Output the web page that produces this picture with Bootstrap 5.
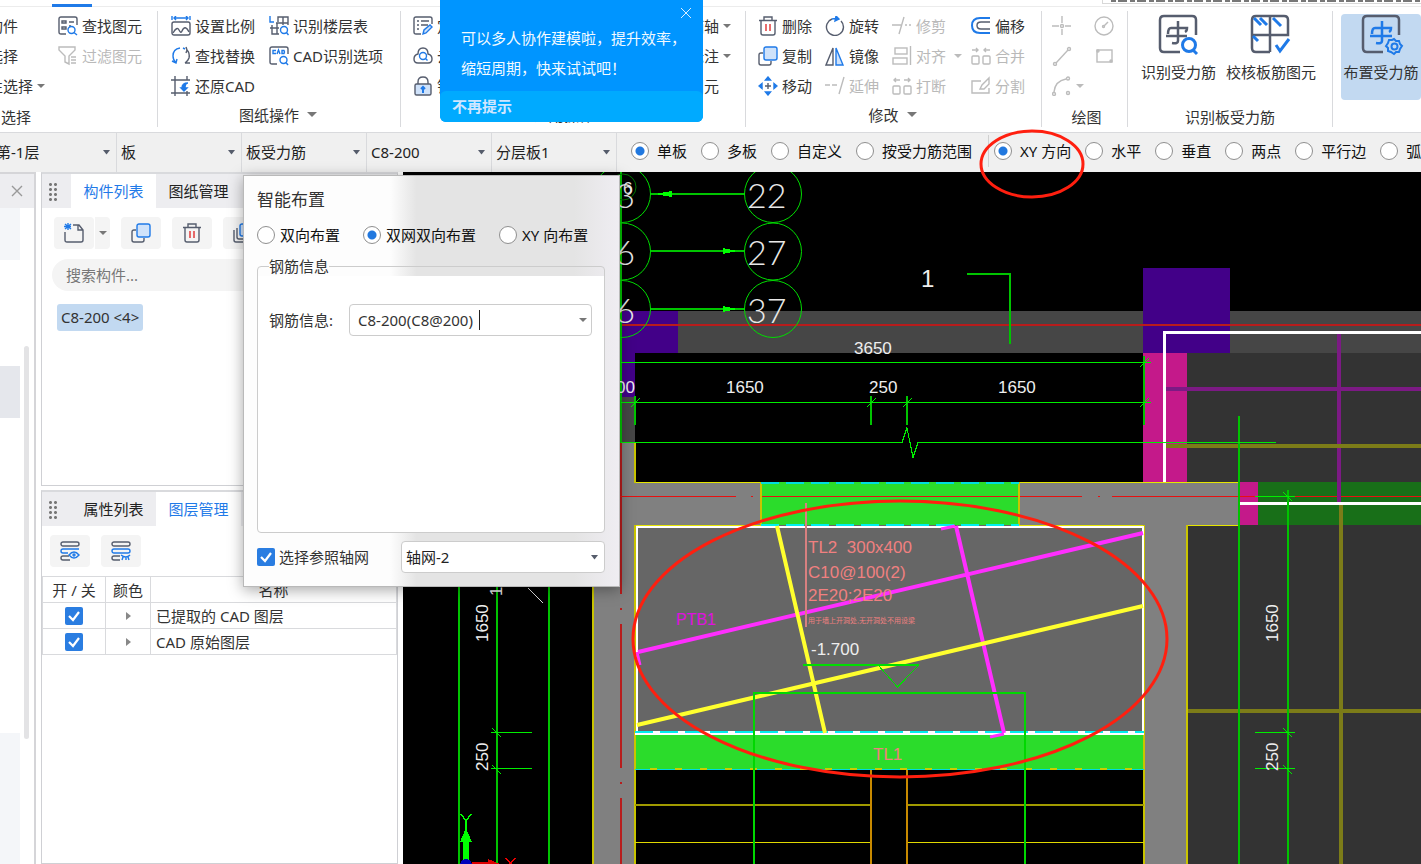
<!DOCTYPE html>
<html lang="zh-CN">
<head>
<meta charset="utf-8">
<meta name="viewport" content="width=device-width, initial-scale=1">
<title>智能布置</title>
<link rel="stylesheet" href="https://cdn.jsdelivr.net/npm/bootstrap@5.3.0/dist/css/bootstrap.min.css">
<style>
  :root { --ink:#333; --blue:#1f7ae8; --line:#d9dadd; --bar:#f0f0f0; --icon:#565d6e; --sel:#c2d9f1; }
  body { font:15px/20px "Noto Sans","Noto Sans CJK SC",sans-serif; color:var(--ink); background:#fff; }
  .app { height:100vh; min-height:600px; }
  svg.ico { width:20px; height:20px; flex:none; fill:none; stroke:var(--icon); stroke-width:1.4; overflow:visible; }
  .caret { flex:none; width:0; height:0; border:4px solid transparent; border-top:4px solid #777; border-bottom:0; }
  .caret-big { border-width:5px; border-bottom:0; }

  /* ribbon */
  .tabstrip { height:7px; flex:none; border-bottom:1px solid #ececec; }
  .tabstrip i { position:absolute; left:52px; top:4px; width:40px; height:3px; background:var(--blue); }
  .tabtip { position:absolute; left:1102px; right:0; top:0; height:4px; border:1px solid #d8d8d8; border-top:0; border-right:0; background:#fff; }
  .tabtip span { display:block; margin-left:8px; height:2px; background:repeating-linear-gradient(90deg,#777 0 5px,#fff 5px 7px,#777 7px 16px,#fff 16px 19px); }
  .ribbon { height:125px; flex:none; padding:4px 0 5px; }
  .rgroup { border-right:1px solid var(--line); flex:none; display:flex; flex-direction:column; }
  .rgroup:last-child { border:0; }
  .rcols { height:90px; display:flex; }
  .rcols > div { flex:none; }
  .rbtn { display:flex; align-items:center; gap:4px; height:30px; padding:0; border:0; background:none; color:inherit; white-space:nowrap; }
  .rbtn:disabled { color:#b9b9b9; }
  .rbtn:disabled svg.ico { stroke:#bcbcbc; }
  .rbtn:disabled .caret { border-top-color:#bbb; }
  .rlabel { height:26px; display:flex; align-items:center; justify-content:center; gap:8px; padding-top:5px; white-space:nowrap; }
  .rlabel-menu { padding-top:1px; }
  .g-select { width:283px; margin-left:-125px; padding-left:83px; }
  .g-select .rlabel { margin-left:-83px; }
  .g-paper { width:243px; padding-left:13px; }
  .g-paper .rlabel { margin-left:-15px; }
  .g-common { width:345px; padding-left:12px; }
  .g-common .rlabel { margin-left:-12px; }
  .g-edit { width:296px; padding-left:12px; }
  .g-edit .rlabel { margin-left:-14px; }
  .g-draw { width:86px; padding-left:10px; }
  .g-draw .rlabel { margin-left:-6px; }
  .g-check { width:205px; }
  .g-place { flex:1 1 0; min-width:0; overflow:hidden; padding-left:8px; }
  .w42 { width:42px; } .w67 { width:67px; } .w79 { width:79px; } .w98 { width:98px; } .w100x { width:100px; } .w246 { width:246px; }
  .big { border:0; background:none; color:inherit; display:flex; flex-direction:column; align-items:center; gap:8px; white-space:nowrap; padding:3px 5px; height:86px; border-radius:4px; }
  .big svg { width:40px; height:40px; fill:none; stroke:var(--icon); stroke-width:3; overflow:visible; }
  .big.on { background:var(--sel); margin-top:3px; padding-top:0; }

  /* option bar */
  .optbar { height:40px; flex:none; background:var(--bar); border-top:1px solid var(--line); white-space:nowrap; }
  .combo { appearance:none; width:125px; height:100%; flex:none; border:0; border-right:1px solid var(--line); padding:0 16px 1px 4px; color:#222; outline:0;
    background:url("data:image/svg+xml,%3Csvg xmlns='http://www.w3.org/2000/svg' width='7' height='5'%3E%3Cpath d='M0 0h7L3.5 4.5z' fill='%23555c6b'/%3E%3C/svg%3E") no-repeat right 6px center; }
  .combo-first { margin-left:-8px; }
  .ranges { margin-left:14px; margin-bottom:3px; }
  .rad { display:flex; align-items:center; gap:8px; margin-right:14px; color:#111; flex:none; }
  .rad input { appearance:none; width:18px; height:18px; margin:0; border:1px solid #8f8f8f; border-radius:50%; background:#fff; flex:none; }
  .rad input:checked { background:radial-gradient(circle,#2178df 0 4px,#fff 5px); }
  .vsep { width:1px; height:32px; background:#d0d0d0; margin:0 5px 0 2px; }

  /* docked panels */
  .rail { width:36px; flex:none; border:solid #d5d5d8; border-width:2px 2px 0 0; background:#fff; }
  .railhead { height:34px; background:#ededf0; }
  .railbody { flex:1; }
  .railtrack { width:20px; }
  .soft { background:#f4f6f9; } .mid { background:#e5e7ec; }
  .h52 { height:52px; } .h106 { height:106px; } .h315 { height:315px; }
  .railscroll { width:5px; height:393px; margin:138px 0 0 4px; border-radius:3px; background:#e3e3e5; }
  .dock { width:357px; flex:none; margin:0 5px; }
  .pane { border:1px solid #cfd0d4; border-top:2px solid var(--line); background:#fff; }
  .pane-top { height:314px; }
  .panehead { height:34px; background:#ededf0; display:flex; }
  .ptab { border:0; background:none; padding:0 12px; width:85px; white-space:nowrap; color:#222; }
  .ptab.on { background:#fff; color:var(--blue); }
  .grip { width:29px; padding:8px 0 0 6px; }
  .grip i { display:block; width:9px; height:19px; background:radial-gradient(circle,#777 1px,transparent 2px) 0 0/5px 5px; }
  .tools { display:flex; margin-top:9px; }
  .tools-list { padding-left:12px; }
  .tools-layer { padding-left:8px; gap:11px; margin-bottom:9px; }
  .tbtn { width:40px; height:32px; border:0; border-radius:4px; background:#f4f4f4; display:flex; align-items:center; justify-content:center; padding:0; flex:none; }
  .tbtn-s { width:15px; border-radius:0 4px 4px 0; margin:0 11px 0 1px; }
  .tbtn-m { margin-right:11px; }
  .findbar { padding:0 10px; margin-top:10px; }
  .find { height:32px; border:0; border-radius:16px; background:#f4f4f4; padding:0 14px; width:100%; outline:0; }
  .find::placeholder { color:#777; }
  .chiprow { padding-left:15px; margin-top:13px; }
  .chip { display:inline-block; background:var(--sel); border-radius:3px; padding:3px 4px; height:27px; white-space:pre; }
  .layers { width:100%; border-collapse:collapse; table-layout:fixed; margin:0; }
  .layers th, .layers td { border:1px solid var(--line); height:26px; padding:0 5px; font-weight:400; white-space:nowrap; }
  .layers th:first-child, .layers td:first-child { width:63px; }
  .layers th:nth-child(2) { width:45px; }
  .tick { appearance:none; display:block; width:18px; height:18px; margin:0; border-radius:2px; flex:none;
    background:#2a7de1 url("data:image/svg+xml,%3Csvg xmlns='http://www.w3.org/2000/svg' width='18' height='18'%3E%3Cpath d='M4 9l4 4 6-8' fill='none' stroke='white' stroke-width='2.2'/%3E%3C/svg%3E"); }
  .expand { display:block; border:4px solid transparent; border-left:5px solid #888; border-right:0; width:0; margin:0 auto; }

  /* drawing */
  .cad { flex:1; min-width:0; background:#000; }
  .cad svg { width:100%; height:100%; display:block; }
  .cad text { font-family:"Liberation Sans","Noto Sans CJK SC",sans-serif; white-space:pre; }
  .dim { font-size:17px; fill:#eee; }
  .cad text.axis { font-family:Lato,sans-serif; font-size:34px; font-weight:300; fill:#e8e8e8; }
  .cad text.cut { font-size:24px; }
  .note { font-size:17px; fill:#f08080; }

  /* floating windows */
  .toastbox { position:absolute; left:440px; top:0; width:263px; height:122px; border-radius:0 0 6px 6px; background:#0095ff; color:#f2faff; z-index:5; overflow:hidden; }
  .toastbox p { line-height:30px; margin:0; padding:23px 0 0 21px; white-space:nowrap; }
  .toastbox .shut { position:absolute; right:11px; top:7px; border:0; background:none; padding:0; line-height:0; }
  .toastbox a { display:block; margin-top:8px; height:31px; line-height:31px; padding-left:12px; background:#0af; color:#cfe6ff; border-radius:6px 6px 0 0; text-decoration:none; font-weight:600; }
  .dlg { position:absolute; left:243px; top:175px; width:377px; height:412px; padding:14px 14px 13px 13px; z-index:4; border:1px solid #b9b9b9; box-shadow:0 3px 14px rgba(0,0,0,.35);
    background:linear-gradient(90deg,#fdfdfd 0 39%,#e4e4e4 46% 88%,#efedf2); display:flex; flex-direction:column; }
  .dlg h1 { font-size:17px; line-height:20px; margin:0; color:#333; font-weight:400; }
  .modes { margin:15px 0 11px; }
  .dlg .rad { gap:5px; margin-right:23px; }
  .dlg fieldset { border:1px solid #ccc; border-radius:4px; background:linear-gradient(transparent 0 9px,#fff 9px); padding:0 12px 0 11px; flex:1; margin:0 0 8px; }
  .dlg legend { float:none; width:auto; font-size:15px; line-height:20px; margin:0; padding:0; color:#333; }
  .field { margin-top:28px; }
  .box { height:32px; border:1px solid #ccc; border-radius:4px; background-color:#fff; padding-left:8px; }
  .box.combo { width:204px; padding-left:4px; border:1px solid #ccc; }
  .textcombo { flex:1; }
  .textcombo input { border:0; outline:0; width:126px; padding:0; background:none; color:#333; }
  .beam { width:1px; height:20px; background:#222; margin-left:-5px; }
  .marks { position:absolute; inset:0; width:100%; height:100%; pointer-events:none; z-index:6; fill:none; stroke:#ff1f0f; stroke-width:3; }
</style>
</head>
<body>
<svg class="d-none">
  <symbol id="i-find" viewBox="0 0 20 20"><path d="M8 18H3q-2 0-2-2V3q0-2 2-2h14q2 0 2 2v6M4 5h4v2H4zM11 6h5M4 11h4v2H4zM11 10h2"/><g stroke="#1f7ae8"><circle cx="13.500" cy="14" r="3.500"/><path d="M16 16.500l3 2.500"/></g></symbol>
  <symbol id="i-filter" viewBox="0 0 20 20"><path d="M1 1h16v3l-6 6v8l-4-2v-6L1 4zM13 11h5M13 14h5M13 17h5"/></symbol>
  <symbol id="i-scale" viewBox="0 0 20 20"><rect x="1" y="6" width="18" height="13" rx="2"/><path d="M2 17q4-7 6-3t3 1q3-7 7 1"/><path stroke="#1f7ae8" d="M1 0v4M19 0v4M3 2h14M5 0L3 2l2 2M15 0l2 2-2 2"/></symbol>
  <symbol id="i-swap" viewBox="0 0 20 20"><path stroke="#1f7ae8" d="M9 2Q2 3 2 10q0 4 3 7M1 15l4 2 1-4M12 2l2 1"/><path d="M16 4q3 3 2 8-1 3-4 5M14 17h5M15 1l1 3-1 3"/></symbol>
  <symbol id="i-restore" viewBox="0 0 20 20"><path d="M4 0v20M0 4h19M0 17h19M16 0v4M16 15v5"/><path stroke="#1f7ae8" fill="#1f7ae8" d="M17 7q-3 0-3 5h2l-3 3-3-3h1q0-5 6-5z"/></symbol>
  <symbol id="i-floor" viewBox="0 0 20 20"><path d="M9 6V1h10v8M14 1v8M3 9v9h7M8 7v11M1 12h9M7 7h12"/><g stroke="#1f7ae8"><path d="M1 0v6h4"/><circle cx="15" cy="14" r="3.500"/><path d="M17.500 16.500l2 2.500"/></g></symbol>
  <symbol id="i-cad" viewBox="0 0 20 20"><path d="M8 18H3q-2 0-2-2V3q0-2 2-2h14q2 0 2 2v5"/><g stroke="#1f7ae8"><path d="M7 4.500H4v3h3M8 8l1.500-4L11 8M13 4.500v3h2q1-1.500 0-3z"/><circle cx="14.500" cy="14" r="3.500"/><path d="M17 16.500l2 2.500"/></g></symbol>
  <symbol id="i-define" viewBox="0 0 20 20"><path d="M8 18H3q-2 0-2-2V3q0-2 2-2h14q2 0 2 2v5M4 5h2M8 5h8M4 9h2M8 9h7M4 13h2"/><path stroke="#1f7ae8" fill="#cfe2fa" d="M10 18l1-4 6-5 2 2-6 6z"/></symbol>
  <symbol id="i-cloud" viewBox="0 0 20 20"><path d="M5 17q-4 0-4-4t4-5q0-6 5-6t5 6q4 1 4 5t-4 4z"/><g stroke="#1f7ae8"><circle cx="10" cy="10" r="3.500"/><path d="M12.500 12.500l2 2"/></g></symbol>
  <symbol id="i-lock" viewBox="0 0 20 20"><path d="M5 8V6q0-5 5-5t5 5v2"/><rect x="2" y="8" width="16" height="11" rx="1.500" fill="#cfe2fa"/><path stroke="#1f7ae8" stroke-width="2" d="M10 17v-5M8 13l2-2 2 2"/></symbol>
  <symbol id="i-trash" viewBox="0 0 20 20"><path d="M1 4.500h18M6 4V1h8v3M3 5v12q0 2 2 2h10q2 0 2-2V5"/><path stroke="#e03030" d="M8 8v7M12 8v7"/></symbol>
  <symbol id="i-copy" viewBox="0 0 20 20"><path d="M5 7H3Q1 7 1 9v8q0 2 2 2h8q2 0 2-2v-2"/><rect x="6" y="1" width="13" height="13" rx="2" fill="#cfe2fa" stroke="#1f7ae8"/></symbol>
  <symbol id="i-copies" viewBox="0 0 20 20"><path d="M1 7v10q0 2 2 2h10M4 5v9q0 2 2 2h8"/><rect x="7" y="1" width="12" height="12" rx="2" fill="#cfe2fa" stroke="#1f7ae8"/></symbol>
  <symbol id="i-move" viewBox="0 0 20 20"><path d="M10 7v6M7 10h6"/><path stroke="#1f7ae8" fill="#1f7ae8" d="M7.500 4L10 1l2.500 3zM7.500 16l2.500 3 2.500-3zM4 7.500L1 10l3 2.500zM16 7.500l3 2.500-3 2.500z"/></symbol>
  <symbol id="i-rotate" viewBox="0 0 20 20"><path d="M7 3a8.500 8.500 0 1 0 9 2"/><path stroke="#1f7ae8" fill="#1f7ae8" d="M7 3q4-1 6 0M11 0l3 3-4 2z"/></symbol>
  <symbol id="i-mirror" viewBox="0 0 20 20"><path d="M8 2v17H1z"/><path stroke="#1f7ae8" fill="#cfe2fa" d="M11 2v17h7z"/></symbol>
  <symbol id="i-trim" viewBox="0 0 20 20"><path d="M0 9h9M13 9h2M17 9h2M12 1L7 18"/></symbol>
  <symbol id="i-extend" viewBox="0 0 20 20"><path d="M0 9h5M7 9h5M19 1l-5 17"/></symbol>
  <symbol id="i-align" viewBox="0 0 20 20"><rect x="3" y="2" width="12" height="6"/><rect x="1" y="12" width="14" height="6"/><path d="M18.500 0v19"/></symbol>
  <symbol id="i-break" viewBox="0 0 20 20"><rect x="1" y="10" width="7" height="8" rx="1"/><rect x="12" y="10" width="7" height="8" rx="1"/><path d="M8 4H2M4 2L2 4l2 2M12 4h6M16 2l2 2-2 2"/></symbol>
  <symbol id="i-merge" viewBox="0 0 20 20"><rect x="1" y="10" width="7" height="8" rx="1"/><rect x="12" y="10" width="7" height="8" rx="1"/><path d="M1 4h6M5 2l2 2-2 2M19 4h-6M15 2l-2 2 2 2"/></symbol>
  <symbol id="i-offset" viewBox="0 0 20 20"><path stroke="#1f7ae8" stroke-width="2" d="M19 2H9q-8 0-8 7.500T9 17h10"/><path d="M19 6H10q-4 0-4 3.500T10 13h9"/></symbol>
  <symbol id="i-split" viewBox="0 0 20 20"><path d="M10 5H1v12h17v-5M9 13l2-4 7-7v6l-5 5z"/></symbol>
  <symbol id="i-point" viewBox="0 0 20 20"><path d="M0 10h7M13 10h6M10 0v7M10 13v6"/><circle cx="10" cy="10" r="1.500"/></symbol>
  <symbol id="i-circle" viewBox="0 0 20 20"><circle cx="10" cy="10" r="9"/><path d="M10 10l4-4"/><circle cx="9.500" cy="10.500" r="1"/></symbol>
  <symbol id="i-line" viewBox="0 0 20 20"><path d="M4 17L16 4"/><circle cx="3" cy="18" r="1.500"/><circle cx="17" cy="3" r="1.500"/></symbol>
  <symbol id="i-rect" viewBox="0 0 20 20"><rect x="3" y="4" width="15" height="12"/><circle cx="4" cy="5" r="1"/><circle cx="17" cy="15" r="1"/></symbol>
  <symbol id="i-arc" viewBox="0 0 20 20"><path d="M2 16Q3 5 14 3"/><circle cx="2" cy="18" r="1.500"/><circle cx="16" cy="2.500" r="1.500"/><circle cx="16" cy="17" r="1.500"/></symbol>
  <symbol id="i-new" viewBox="0 0 20 20"><path d="M9 2h6l4 5v10q0 2-2 2H3q-2 0-2-2V9M14 2v5h5"/><path stroke="#1f7ae8" d="M1 1l6 5M7 1L1 6M4 0v7M0 3.500h7"/></symbol>
  <symbol id="i-show" viewBox="0 0 20 20"><rect x="1" y="1" width="18" height="4" rx="2"/><path stroke="#1f7ae8" d="M19 8H3q-2 0-2 2t2 2h5"/><path d="M9 15H3q-2 0-2 2t2 2h7"/><path stroke="#1f7ae8" d="M9 14q5-6 10 0-5 6-10 0z"/><circle cx="14" cy="14" r="1" stroke="#1f7ae8"/></symbol>
  <symbol id="i-hide" viewBox="0 0 20 20"><rect x="1" y="1" width="18" height="4" rx="2"/><rect x="1" y="8" width="18" height="4" rx="2" stroke="#1f7ae8"/><path d="M9 15H3q-2 0-2 2t2 2h6"/><path stroke="#1f7ae8" d="M10 14q5 4 9 0M12 16l-1 3M15 16v3M17 16l1 3"/></symbol>
</svg>

<div class="app d-flex flex-column position-relative overflow-hidden">
  <div class="tabstrip position-relative"><i></i><div class="tabtip"><span></span></div></div>

  <div class="ribbon d-flex overflow-hidden">
    <section class="rgroup g-select">
      <div class="rcols">
        <div class="w100x">
          <button class="rbtn">拾取构件</button><button class="rbtn">批量选择</button><button class="rbtn">按属性选择 <span class="caret"></span></button>
        </div>
        <div>
          <button class="rbtn"><svg class="ico"><use href="#i-find"/></svg>查找图元</button>
          <button class="rbtn" disabled><svg class="ico"><use href="#i-filter"/></svg>过滤图元</button>
        </div>
      </div>
      <div class="rlabel">选择</div>
    </section>
    <section class="rgroup g-paper">
      <div class="rcols">
        <div class="w98">
          <button class="rbtn"><svg class="ico"><use href="#i-scale"/></svg>设置比例</button>
          <button class="rbtn"><svg class="ico"><use href="#i-swap"/></svg>查找替换</button>
          <button class="rbtn"><svg class="ico"><use href="#i-restore"/></svg>还原CAD</button>
        </div>
        <div>
          <button class="rbtn"><svg class="ico"><use href="#i-floor"/></svg>识别楼层表</button>
          <button class="rbtn"><svg class="ico"><use href="#i-cad"/></svg>CAD识别选项</button>
        </div>
      </div>
      <div class="rlabel rlabel-menu">图纸操作 <span class="caret caret-big"></span></div>
    </section>
    <section class="rgroup g-common">
      <div class="rcols">
        <div class="w246">
          <button class="rbtn"><svg class="ico"><use href="#i-define"/></svg>定义</button>
          <button class="rbtn"><svg class="ico"><use href="#i-cloud"/></svg>云检查</button>
          <button class="rbtn"><svg class="ico"><use href="#i-lock"/></svg>锁定</button>
        </div>
        <div>
          <button class="rbtn">两点辅轴 <span class="caret"></span></button>
          <button class="rbtn">尺寸标注 <span class="caret"></span></button>
          <button class="rbtn">复制图元</button>
        </div>
      </div>
      <div class="rlabel rlabel-menu">通用操作 <span class="caret caret-big"></span></div>
    </section>
    <section class="rgroup g-edit">
      <div class="rcols">
        <div class="w67">
          <button class="rbtn"><svg class="ico"><use href="#i-trash"/></svg>删除</button>
          <button class="rbtn"><svg class="ico"><use href="#i-copy"/></svg>复制</button>
          <button class="rbtn"><svg class="ico"><use href="#i-move"/></svg>移动</button>
        </div>
        <div class="w67">
          <button class="rbtn"><svg class="ico"><use href="#i-rotate"/></svg>旋转</button>
          <button class="rbtn"><svg class="ico"><use href="#i-mirror"/></svg>镜像</button>
          <button class="rbtn" disabled><svg class="ico"><use href="#i-extend"/></svg>延伸</button>
        </div>
        <div class="w79">
          <button class="rbtn" disabled><svg class="ico"><use href="#i-trim"/></svg>修剪</button>
          <button class="rbtn" disabled><svg class="ico"><use href="#i-align"/></svg>对齐 <span class="caret ms-1"></span></button>
          <button class="rbtn" disabled><svg class="ico"><use href="#i-break"/></svg>打断</button>
        </div>
        <div>
          <button class="rbtn"><svg class="ico"><use href="#i-offset"/></svg>偏移</button>
          <button class="rbtn" disabled><svg class="ico"><use href="#i-merge"/></svg>合并</button>
          <button class="rbtn" disabled><svg class="ico"><use href="#i-split"/></svg>分割</button>
        </div>
      </div>
      <div class="rlabel rlabel-menu">修改 <span class="caret caret-big"></span></div>
    </section>
    <section class="rgroup g-draw">
      <div class="rcols">
        <div class="w42">
          <button class="rbtn" disabled aria-label="点"><svg class="ico"><use href="#i-point"/></svg></button>
          <button class="rbtn" disabled aria-label="直线"><svg class="ico"><use href="#i-line"/></svg></button>
          <button class="rbtn" disabled aria-label="弧"><svg class="ico"><use href="#i-arc"/></svg><span class="caret"></span></button>
        </div>
        <div>
          <button class="rbtn" disabled aria-label="圆"><svg class="ico"><use href="#i-circle"/></svg></button>
          <button class="rbtn" disabled aria-label="矩形"><svg class="ico"><use href="#i-rect"/></svg></button>
        </div>
      </div>
      <div class="rlabel">绘图</div>
    </section>
    <section class="rgroup g-check">
      <div class="rcols ps-2">
        <button class="big"><svg viewBox="1 0 40 40"><path stroke-width="2.500" d="M22 38H6q-4 0-4-4V6q0-4 4-4h28q4 0 4 4v15"/><path stroke-width="2.500" d="M20 7v20q0 3-6 2M10 20q0-6 3-6h16q0 3-2 4M8 22h21"/><g stroke="#1f7ae8"><circle cx="31" cy="31" r="6.500"/><path d="M35 36l4 4"/></g></svg>识别受力筋</button>
        <button class="big"><svg viewBox="1 0 40 40"><path stroke-width="2.500" d="M20 38H6q-4 0-4-4V6q0-4 4-4h28q4 0 4 4v15H2M20 2v36"/><g stroke="#1f7ae8"><path d="M4 4l7 7M10 4l7 7M23 4l8 8M3 22l5 5M26 31l4 6 9-12"/></g></svg>校核板筋图元</button>
      </div>
      <div class="rlabel">识别板受力筋</div>
    </section>
    <section class="rgroup g-place">
      <button class="big on"><svg viewBox="0 0 40 40"><path stroke-width="2.500" d="M22 38H6q-4 0-4-4V6q0-4 4-4h28q4 0 4 4v15"/><g stroke="#1f7ae8"><path stroke-width="2.500" d="M21 7v20q0 3-6 2M11 20q0-6 3-6h16q0 3-2 4M9 22h22"/><path stroke-width="2" d="M33 25l2 2 3 0 1 3 2 2-2 3-1 3-3 0-2 2-3-2-3-1 0-3-2-2 2-3 1-3 3 0z"/><circle cx="33.500" cy="32.500" r="3" stroke-width="2"/></g></svg>布置受力筋</button>
    </section>
  </div>

  <div class="optbar d-flex align-items-center overflow-hidden">
    <select class="combo combo-first" aria-label="楼层"><option>第-1层</option></select>
    <select class="combo" aria-label="构件类型"><option>板</option></select>
    <select class="combo" aria-label="构件"><option>板受力筋</option></select>
    <select class="combo" aria-label="名称"><option>C8-200</option></select>
    <select class="combo" aria-label="分层"><option>分层板1</option></select>
    <div class="ranges d-flex align-items-center">
      <label class="rad"><input type="radio" name="range" checked>单板</label>
      <label class="rad"><input type="radio" name="range">多板</label>
      <label class="rad"><input type="radio" name="range">自定义</label>
      <label class="rad"><input type="radio" name="range">按受力筋范围</label>
      <span class="vsep"></span>
      <label class="rad"><input type="radio" name="dir" checked>XY 方向</label>
      <label class="rad"><input type="radio" name="dir">水平</label>
      <label class="rad"><input type="radio" name="dir">垂直</label>
      <label class="rad"><input type="radio" name="dir">两点</label>
      <label class="rad"><input type="radio" name="dir">平行边</label>
      <label class="rad"><input type="radio" name="dir">弧线边</label>
    </div>
  </div>

  <div class="d-flex flex-grow-1 overflow-hidden">
    <aside class="rail d-flex flex-column">
      <div class="railhead d-flex align-items-center ps-2"><svg class="ico" viewBox="0 0 20 20"><path stroke="#999" d="M4 5l10 10M14 5L4 15"/></svg></div>
      <div class="railbody d-flex overflow-hidden">
        <div class="railtrack d-flex flex-column"><div class="h52 soft"></div><div class="h106"></div><div class="h52 mid"></div><div class="h315"></div><div class="flex-grow-1 soft"></div></div>
        <div class="railscroll"></div>
      </div>
    </aside>

    <div class="dock d-flex flex-column">
      <section class="pane pane-top">
        <div class="panehead"><span class="grip"><i></i></span><button class="ptab on">构件列表</button><button class="ptab">图纸管理</button></div>
        <div class="tools tools-list">
          <button class="tbtn" aria-label="新建"><svg class="ico"><use href="#i-new"/></svg></button><button class="tbtn tbtn-s" aria-label="更多"><span class="caret"></span></button>
          <button class="tbtn tbtn-m" aria-label="复制"><svg class="ico"><use href="#i-copy"/></svg></button>
          <button class="tbtn tbtn-m" aria-label="删除"><svg class="ico"><use href="#i-trash"/></svg></button>
          <button class="tbtn" aria-label="层间复制"><svg class="ico"><use href="#i-copies"/></svg></button>
        </div>
        <div class="findbar"><input class="find" type="search" placeholder="搜索构件..." aria-label="搜索构件"></div>
        <div class="chiprow"><span class="chip">C8-200 &lt;4&gt;</span></div>
      </section>
      <section class="pane mt-1 flex-grow-1">
        <div class="panehead"><span class="grip"><i></i></span><button class="ptab">属性列表</button><button class="ptab on">图层管理</button></div>
        <div class="tools tools-layer">
          <button class="tbtn" aria-label="显示图层"><svg class="ico"><use href="#i-show"/></svg></button>
          <button class="tbtn" aria-label="隐藏图层"><svg class="ico"><use href="#i-hide"/></svg></button>
        </div>
        <table class="layers">
          <thead><tr><th class="text-center">开 / 关</th><th class="text-center">颜色</th><th class="text-center">名称</th></tr></thead>
          <tbody>
            <tr><td><input class="tick mx-auto" type="checkbox" checked aria-label="已提取的 CAD 图层"></td><td><span class="expand"></span></td><td>已提取的 CAD 图层</td></tr>
            <tr><td><input class="tick mx-auto" type="checkbox" checked aria-label="CAD 原始图层"></td><td><span class="expand"></span></td><td>CAD 原始图层</td></tr>
          </tbody>
        </table>
      </section>
    </div>

    <main class="cad">
      <svg fill="none" shape-rendering="crispEdges">
        <g transform="translate(-403 -172)">
          <!-- walls, columns, slabs -->
          <path fill="#464646" d="M620 311h900v42H620zM593 353h42v90h-42z"/>
          <path fill="#420088" d="M600 311h78v42h-43v44h-35zM1143 268h87v85h-87z"/>
          <path fill="#333" d="M1187 353h400v130h-400zM1187 525h400v500h-400z"/>
          <path fill="#808080" d="M593 443h42v40h604v42h-52v500h-43V525H635v500h-42z"/>
          <path fill="#c4198a" d="M1143 353h44v130h-44zM1239 482h19v43h-19z"/>
          <path fill="#186f18" d="M1258 482h400v43h-400z"/>
          <path fill="#666" d="M635 525h509v208H635z"/>
          <path fill="#2bdc2b" d="M761 482h258v43H761zM635 734h509v35H635z"/>
          <!-- axis lines -->
          <path stroke="#b81c1c" stroke-width="2" d="M620 325h901M621 443v151M621 608v2M621 624v144M621 782v2M621 798v66"/>
          <path stroke="#e81010" d="M620 496.500h116M751 496.500h2M762 496.500h320M1098 496.500h2M1112 496.500h409"/>
          <!-- right-hand rebar -->
          <g stroke="#7c1a84" stroke-width="4"><path d="M1166 389h360M1339 333v170"/></g>
          <g stroke="#7c7c18" stroke-width="4"><path d="M1166 446h360M1341 503v400M1187 711h400"/></g>
          <path stroke="#fff" stroke-width="3" d="M1521 332H1164.500V483M1239 503h300"/>
          <!-- outlines -->
          <path stroke="#e6e600" d="M635 482.500h126M1019 482.500h220M1019 525.500h125M1239 525.500h-52M761 525.500H635"/>
          <path stroke="#c9c400" stroke-width="2" d="M635 443v40M761 482v43M1019 482v43M1144 525v475M1187 525v475M635 525v475M593 500v500"/>
          <path stroke="#a09a00" stroke-width="2" d="M635 805h236M907 805h237"/>
          <path stroke="#e0d800" d="M635 842.500h236M907 842.500h237"/>
          <path stroke="#c88a00" stroke-width="2" d="M871 769v200M907 769v200"/>
          <path stroke="#fff" stroke-width="2" d="M637 733V527h506v206"/>
          <path stroke="#0dd" d="M635 769.500h509"/>
          <path stroke="#0dd" stroke-width="2" stroke-dasharray="18 7" d="M761 483h258"/>
          <path stroke="#fff" stroke-width="2" d="M635 734h509M635 732h509"/>
          <path stroke="#0ee" stroke-width="2" stroke-dasharray="18 7" d="M635 732h509M761 525h258"/>
          <path stroke="#cc0" stroke-width="2" stroke-dasharray="7 18" d="M650 769h494"/>
          <!-- dimension lines -->
          <g stroke="#00c400" stroke-width="2">
            <path d="M621 172v271M635 396v29M871 396v29M907 396v29M1144 356v69M967 274h43v70M1239 416v500M1288 490v400M459 500v400M497 500v400M549 500v400M650 194h95M650 251h95M650 309h95"/>
          </g>
          <g stroke="#0e0">
            <path d="M621 362.500h530M621 402.500h530M621 442.500h281l5-15 6 30 5-15h358M1255 496.500h40M1255 732.500h40M1255 768.500h40M491 732.500h41M491 768.500h41"/>
            <path d="M867 407l9-9M903 407l9-9M1140 367l9-9M1140 407l9-9M631 407l9-9M1283 728l9 9M1283 765l9 9M1283 492l9 9M492 728l9 9M492 765l9 9"/>
          </g>
          <g stroke="#0d0" shape-rendering="auto"><circle cx="773" cy="194" r="28.500"/><circle cx="773" cy="251.500" r="28.500"/><circle cx="773" cy="309" r="28.500"/><circle cx="622" cy="194" r="28.500"/><circle cx="622" cy="251.500" r="28.500"/><circle cx="622" cy="309" r="28.500"/><circle cx="623" cy="187" r="13" stroke="#070"/></g>
          <path fill="#0f0" d="M655 194l17-3v6zM737 251l-14-3v6zM737 309l-14-3v6z"/>
          <!-- sloped rebar -->
          <g stroke-width="4" shape-rendering="auto">
            <path stroke="#ff2eff" d="M638 652l505-119M956 526l48 207"/>
            <path stroke="#ff2eff" stroke-width="3" d="M637 652l3 13M941 529l14-3M990 737l14-3"/>
            <path stroke="#ffff2e" d="M637 725l506-119M777 526l48 207"/>
          </g>
          <path stroke="#00d800" stroke-width="2" d="M754 900V693h271V900"/>
          <path stroke="#0d0" stroke-width="2" d="M803 665h116"/>
          <path stroke="#0d0" d="M919 665l-21.500 22-19.500-22"/>
          <path stroke="#d88080" stroke-width="2" d="M806 503v124"/>
          <!-- labels -->
          <text class="axis" x="747" y="208">22</text><text class="axis" x="747" y="265">27</text><text class="axis" x="747" y="323">37</text><text class="axis" x="635" y="208" text-anchor="end">23</text><text class="axis" x="635" y="265" text-anchor="end">26</text><text class="axis" x="635" y="323" text-anchor="end">36</text>
          <g class="dim">
            <text x="623" y="194">6</text>
            <text class="cut" x="921" y="287">1</text><text x="854" y="354">3650</text><text x="726" y="393">1650</text><text x="869" y="393">250</text><text x="998" y="393">1650</text><text x="635" y="393" text-anchor="end">200</text>
            <text x="811" y="655">-1.700</text>
            <text transform="translate(488 642) rotate(-90)">1650</text><text transform="translate(488 771) rotate(-90)">250</text><text transform="translate(502 596) rotate(-90)">1</text>
            <text transform="translate(1278 642) rotate(-90)">1650</text><text transform="translate(1278 771) rotate(-90)">250</text>
          </g>
          <path stroke="#ddd" d="M528 588l15 15"/>
          <g class="note"><text x="808" y="553">TL2  300x400</text><text x="808" y="578">C10@100(2)</text><text x="808" y="601">2E20;2E20</text><text x="873" y="760">TL1</text><text x="808" y="623" font-size="7">用于墙上开洞处,无开洞处不用设梁</text></g>
          <text x="676" y="625" font-size="16" fill="#e010e0">PTB1</text>
          <!-- coordinate mark -->
          <path fill="#0f0" d="M460 842l6-14 6 14h-3v22h-6v-22z"/><path fill="#d00" d="M472 862h16v-3l12 5H472z"/><circle cx="466" cy="865" r="6" fill="#00b"/>
          <path stroke="#0f0" stroke-width="1.500" d="M461 814l5 7 5-7M466 821v8"/><path stroke="#e00" stroke-width="1.500" d="M506 858l9 10M515 858l-9 10"/>
        </g>
      </svg>
    </main>
  </div>

  <div class="toastbox">
    <button class="shut" aria-label="关闭"><svg width="12" height="12" fill="none" stroke="#d8efff"><path d="M1 1l10 10M11 1L1 11"/></svg></button>
    <p>可以多人协作建模啦，提升效率，<br>缩短周期，快来试试吧！</p>
    <a href="#">不再提示</a>
  </div>

  <form class="dlg">
    <h1>智能布置</h1>
    <div class="modes d-flex">
      <label class="rad"><input type="radio" name="mode">双向布置</label>
      <label class="rad"><input type="radio" name="mode" checked>双网双向布置</label>
      <label class="rad me-0"><input type="radio" name="mode">XY 向布置</label>
    </div>
    <fieldset>
      <legend>钢筋信息</legend>
      <div class="field d-flex align-items-center">
        <label for="bar" class="me-2 pe-1">钢筋信息:</label>
        <div class="box textcombo d-flex align-items-center ms-1"><input id="bar" type="text" value="C8-200(C8@200)"><span class="beam"></span><span class="caret ms-auto me-1"></span></div>
      </div>
    </fieldset>
    <div class="d-flex align-items-center">
      <input class="tick me-1" type="checkbox" id="ref" checked><label for="ref">选择参照轴网</label>
      <select class="combo box ms-auto" aria-label="轴网"><option>轴网-2</option></select>
    </div>
  </form>

  <svg class="marks"><ellipse cx="1032" cy="164" rx="51" ry="33"/><ellipse cx="900" cy="639" rx="267" ry="138"/></svg>
</div>
<script src="https://cdn.jsdelivr.net/npm/bootstrap@5.3.0/dist/js/bootstrap.bundle.min.js"></script>
</body>
</html>
